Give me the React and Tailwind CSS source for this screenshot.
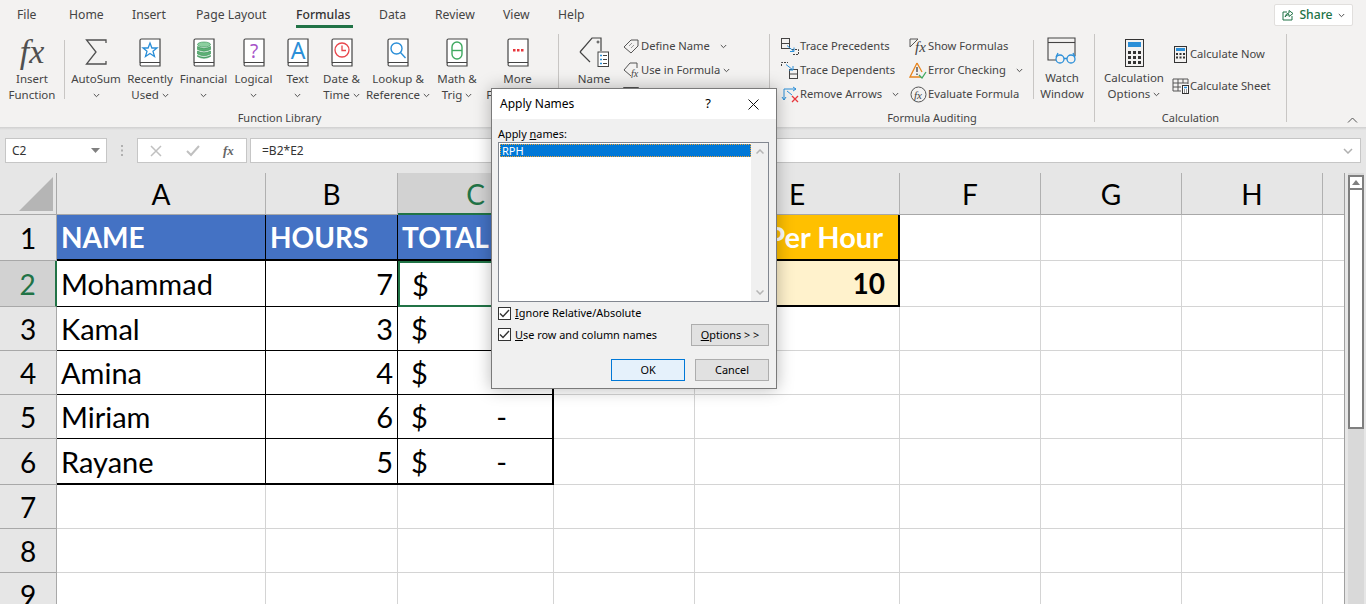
import React from 'react';

const ui = { fontFamily: '"Noto Sans", sans-serif' };

const Chevron = ({ className = '' }) => (
  <svg width="7" height="5" viewBox="0 0 7 5" className={`inline-block ${className}`}>
    <path d="M0.8 1 L3.5 3.7 L6.2 1" fill="none" stroke="#505050" strokeWidth="1" />
  </svg>
);

const Book = ({ children }) => (
  <svg width="22" height="29" viewBox="0 0 22 29">
    <path d="M1 25V2.5Q1 1 2.5 1H21V28H2.5Q1 28 1 26Q1 24.5 2.5 24.5H21" fill="#fff" stroke="#444" strokeWidth="1.2" />
    {children}
  </svg>
);

const icons = {
  star: <path d="M11 5l1.9 5h5.100l-4 3.300 1.500 5.200-4.500-3-4.500 3 1.500-5.200-4-3.300h5.100z" fill="none" stroke="#2b8fd8" strokeWidth="1.3" />,
  coins: (
    <g fill="#5db075" stroke="#2f8f4f" strokeWidth="0.6">
      <ellipse cx="11" cy="6.5" rx="6.5" ry="2.5" fill="#8ccf9f" />
      <path d="M4.5 8.5q6.5 3.500 13 0v3q-6.500 3.500-13 0z" />
      <path d="M4.5 13q6.5 3.500 13 0v3q-6.500 3.500-13 0z" />
      <path d="M4.5 17.5q6.5 3.500 13 0v1q-6.500 3.500-13 0z" />
    </g>
  ),
  question: <text x="11" y="20" textAnchor="middle" fontSize="19" fill="#a654c8" fontFamily="Noto Sans, sans-serif">?</text>,
  letter: <text x="11" y="21" textAnchor="middle" fontSize="23" fill="#2b8fd8" fontFamily="Noto Sans, sans-serif">A</text>,
  clock: (
    <g fill="none" stroke="#e8474c" strokeWidth="1.3">
      <circle cx="11" cy="12" r="7" />
      <path d="M11 7.5V12.5H15" />
    </g>
  ),
  lens: (
    <g fill="none" stroke="#2b8fd8" strokeWidth="1.4">
      <circle cx="9.5" cy="10.5" r="5.5" />
      <path d="M13.5 14.5L18.5 20" />
    </g>
  ),
  theta: (
    <g fill="none" stroke="#3fa960" strokeWidth="1.4">
      <rect x="6" y="4" width="10" height="17" rx="5" />
      <path d="M6 12.5H16" />
    </g>
  ),
  dots: (
    <g fill="#e8363c">
      <rect x="6" y="11" width="2.5" height="2.5" />
      <rect x="10" y="11" width="2.5" height="2.5" />
      <rect x="14" y="11" width="2.5" height="2.5" />
    </g>
  ),
};

const BookButton = ({ width, icon, line1, line2, caret }) => (
  <div className="flex flex-col items-center shrink-0" style={{ width }}>
    <div className="h-[30px] flex items-center justify-center">
      <Book>{icons[icon]}</Book>
    </div>
    <div className="mt-[4px] text-center leading-[16px] whitespace-nowrap">
      <div>{line1}</div>
      <div>
        {line2} {caret && <Chevron className="align-middle" />}
      </div>
    </div>
  </div>
);

const SmallRow = ({ icon, label, caret, caretGap = 'ml-[10px]' }) => (
  <div className="h-6 flex items-center whitespace-nowrap text-[11.2px]">
    <span className="w-[18px] h-[18px] mr-[1px] flex items-center justify-center shrink-0">{icon}</span>
    <span>{label}</span>
    {caret && <Chevron className={caretGap} />}
  </div>
);

const Sep = ({ className = '' }) => <div className={`w-px bg-[#c8c6c4] shrink-0 ${className}`} />;

const TracePrecedents = () => (
  <svg width="18" height="17" viewBox="0 0 18 17" fill="none">
    <rect x="0.5" y="0.5" width="8" height="10" stroke="#444" />
    <path d="M0.5 5.5H8.5" stroke="#444" />
    <path d="M11 11.5H17.5V16.5H11" stroke="#444" strokeDasharray="2 1" />
    <path d="M6 7.5L13 13.500M13 9.500V13.500H9" stroke="#2b8fd8" />
  </svg>
);

const TraceDependents = () => (
  <svg width="18" height="17" viewBox="0 0 18 17" fill="none">
    <path d="M0.5 4V0.5H7" stroke="#444" strokeDasharray="2 1" />
    <rect x="8.5" y="7.5" width="8" height="9" stroke="#444" />
    <path d="M8.500 12H16.500" stroke="#444" />
    <path d="M5 2.500L12 8M12 4V8H8" stroke="#2b8fd8" />
  </svg>
);

const Ribbon = () => (
  <div className="h-[96px] flex text-[11.5px] text-[#444] relative">
    <div className="w-[64px] shrink-0 flex flex-col items-center">
      <div className="h-[36px] mt-[4px] flex items-center justify-center" style={{ fontFamily: '"Liberation Serif", serif' }}>
        <span className="italic text-[34px] leading-none text-[#505050]">fx</span>
      </div>
      <div className="mt-[1px] text-center leading-[16px]">
        <div>Insert</div>
        <div>Function</div>
      </div>
    </div>
    <Sep className="h-[59px] mt-[10px]" />
    <div className="w-[493px] shrink-0 flex flex-col">
      <div className="flex pt-[7px] h-[79px] pl-[4px]">
        <div className="flex flex-col items-center w-[54px] shrink-0">
          <div className="h-[30px] flex items-center justify-center">
            <svg width="22" height="26" viewBox="0 0 22 26" fill="none">
              <path d="M21 4V1H1.5L11 13L1.5 25H21V22" stroke="#505050" strokeWidth="1.3" />
            </svg>
          </div>
          <div className="mt-[4px] text-center leading-[16px]">
            <div>AutoSum</div>
            <div><Chevron /></div>
          </div>
        </div>
        <BookButton width={54} icon="star" line1="Recently" line2="Used" caret />
        <BookButton width={53} icon="coins" line1="Financial" line2={<Chevron />} />
        <BookButton width={47} icon="question" line1="Logical" line2={<Chevron />} />
        <BookButton width={41} icon="letter" line1="Text" line2={<Chevron />} />
        <BookButton width={47} icon="clock" line1="Date &" line2="Time" caret />
        <BookButton width={66} icon="lens" line1="Lookup &" line2="Reference" caret />
        <BookButton width={52} icon="theta" line1="Math &" line2="Trig" caret />
        <BookButton width={69} icon="dots" line1="More" line2="Functions" caret />
      </div>
      <div className="text-center text-[11px] leading-[16px] mt-[1px] pr-[64px]">Function Library</div>
    </div>
    <Sep className="h-[88px] mt-[4px]" />
    <div className="w-[210px] shrink-0 flex pt-[7px]">
      <div className="w-[56px] flex flex-col items-center shrink-0 ml-[7px]">
        <div className="h-[30px] flex items-center justify-center">
          <svg width="30" height="30" viewBox="0 0 30 30" fill="none">
            <path d="M1 15L13 1H22V14M11 25L1 15" stroke="#444" strokeWidth="1.2" />
            <circle cx="19" cy="5" r="1" stroke="#444" />
            <rect x="19" y="15" width="10.5" height="14.5" fill="#fff" stroke="#444" />
            <path d="M21 18.5h2M21 22.5h2M21 26.5h2" stroke="#2b8fd8" strokeWidth="1.5" />
            <path d="M24 18.5h4M24 22.5h4M24 26.5h4" stroke="#444" />
          </svg>
        </div>
        <div className="mt-[4px] leading-[16px]">Name</div>
      </div>
      <div className="flex flex-col -mt-[3px]">
        <SmallRow
          label="Define Name"
          caret
          caretGap="ml-[10px]"
          icon={
            <svg width="16" height="15" viewBox="0 0 16 15" fill="none">
              <path d="M1 8L8 1H15V7L8 14z" stroke="#555" />
              <path d="M6 7l3-3M8 9l3-3" stroke="#999" />
            </svg>
          }
        />
        <SmallRow
          label="Use in Formula"
          caret
          caretGap="ml-[3px]"
          icon={
            <svg width="16" height="16" viewBox="0 0 16 16" fill="none">
              <path d="M8 14L1 8L7 1H14V6" stroke="#555" />
              <text x="8" y="15" fontSize="10" fontStyle="italic" fill="#444" fontFamily="Liberation Serif, serif">fx</text>
            </svg>
          }
        />
        <SmallRow
          label="Create from Selection"
          icon={
            <svg width="16" height="14" viewBox="0 0 16 14" fill="none">
              <path d="M0.5 0.5H15.5V13.5H0.5zM0.5 5H15.500M5.5 0.5V13.500M10.5 0.5V13.500" stroke="#555" />
            </svg>
          }
        />
      </div>
    </div>
    <Sep className="h-[88px] mt-[4px]" />
    <div className="w-[324px] shrink-0 flex flex-col">
      <div className="flex h-[72px] pt-[4px] pl-[11px]">
        <div className="w-[128px] shrink-0">
          <SmallRow label="Trace Precedents" icon={<TracePrecedents />} />
          <SmallRow label="Trace Dependents" icon={<TraceDependents />} />
          <SmallRow
            label="Remove Arrows"
            caret
            icon={
              <svg width="18" height="17" viewBox="0 0 18 17" fill="none">
                <path d="M3 14V3H15M1 11L3 14L5 11M12 1L15 3L12 5M6 5L11 9" stroke="#2b8fd8" />
                <path d="M11 10L17 16M17 10L11 16" stroke="#e8363c" strokeWidth="1.3" />
              </svg>
            }
          />
        </div>
        <div className="w-[124px] shrink-0">
          <SmallRow
            label="Show Formulas"
            icon={
              <svg width="18" height="17" viewBox="0 0 18 17" fill="none">
                <path d="M1 1H9L1 9z" stroke="#555" />
                <text x="6" y="14" fontSize="15" fontStyle="italic" fill="#444" fontFamily="Liberation Serif, serif">fx</text>
              </svg>
            }
          />
          <SmallRow
            label="Error Checking"
            caret
            icon={
              <svg width="18" height="17" viewBox="0 0 18 17" fill="none">
                <path d="M8 1L1 15H12" stroke="#e8851d" strokeWidth="1.3" />
                <path d="M8 1L13 10" stroke="#e8851d" strokeWidth="1.3" />
                <path d="M8 5V10M8 11.5V13" stroke="#333" strokeWidth="1.2" />
                <path d="M10 13L13 16L17 10" stroke="#3fa960" strokeWidth="1.3" />
              </svg>
            }
          />
          <SmallRow
            label="Evaluate Formula"
            icon={
              <svg width="17" height="17" viewBox="0 0 17 17" fill="none">
                <circle cx="8.5" cy="8.5" r="7.5" stroke="#555" />
                <text x="4" y="13" fontSize="11" fontStyle="italic" fill="#444" fontFamily="Liberation Serif, serif">fx</text>
              </svg>
            }
          />
        </div>
        <Sep className="h-[59px] mt-[6px]" />
        <div className="w-[56px] shrink-0 flex flex-col items-center pt-[3px]">
          <div className="h-[30px] flex items-center justify-center">
            <svg width="30" height="28" viewBox="0 0 30 28" fill="none">
              <path d="M9 23H1V1H28V19" stroke="#444" strokeWidth="1.1" />
              <path d="M1 5.5H28" stroke="#444" strokeWidth="1.1" />
              <circle cx="13" cy="22" r="4" stroke="#2b8fd8" strokeWidth="1.3" />
              <circle cx="24" cy="22" r="4" stroke="#2b8fd8" strokeWidth="1.3" />
              <path d="M17 21.5h3M9 20l2-4M28 20l-2-4" stroke="#2b8fd8" strokeWidth="1.3" />
            </svg>
          </div>
          <div className="mt-[5px] text-center leading-[16px]">
            <div>Watch</div>
            <div>Window</div>
          </div>
        </div>
      </div>
      <div className="text-center text-[11px] leading-[16px] mt-[8px]">Formula Auditing</div>
    </div>
    <Sep className="h-[88px] mt-[4px]" />
    <div className="w-[191px] shrink-0 flex flex-col">
      <div className="flex h-[72px] pt-[8px]">
        <div className="w-[78px] shrink-0 flex flex-col items-center">
          <div className="h-[30px] flex items-center justify-center">
            <svg width="19" height="28" viewBox="0 0 19 28" fill="none">
              <rect x="0.5" y="0.5" width="18" height="27" stroke="#333" />
              <rect x="3" y="3" width="13" height="5" fill="#2b8fd8" />
              <path d="M3 12h3v3H3zM8 12h3v3H8zM13 12h3v3h-3zM3 17h3v3H3zM8 17h3v3H8zM13 17h3v3h-3zM3 22h3v3H3zM8 22h3v3H8zM13 22h3v3h-3z" fill="#333" />
            </svg>
          </div>
          <div className="mt-[3px] text-center leading-[16px] whitespace-nowrap">
            <div>Calculation</div>
            <div>Options <Chevron className="align-middle" /></div>
          </div>
        </div>
        <div className="flex flex-col gap-[8px] pt-[4px] -ml-[2px]">
          <SmallRow
            label="Calculate Now"
            icon={
              <svg width="13" height="17" viewBox="0 0 13 17" fill="none">
                <rect x="0.5" y="0.5" width="12" height="16" stroke="#333" />
                <rect x="2" y="2" width="9" height="3" fill="#2b8fd8" />
                <path d="M2 7h2v2H2zM5.5 7h2v2h-2zM9 7h2v2H9zM2 10.5h2v2H2zM5.5 10.5h2v2h-2zM9 10.5h2v2H9z" fill="#333" />
              </svg>
            }
          />
          <SmallRow
            label="Calculate Sheet"
            icon={
              <svg width="17" height="16" viewBox="0 0 17 16" fill="none">
                <path d="M9 13H1V1H16V6M1 5H16M1 9H9M6 1V13M11 1V5" stroke="#555" />
                <rect x="10.5" y="7.5" width="6" height="8" fill="#fff" stroke="#333" />
                <path d="M12 9.5h3" stroke="#2b8fd8" strokeWidth="1.5" />
                <path d="M12 12h1M14 12h1M12 14h1M14 14h1" stroke="#333" />
              </svg>
            }
          />
        </div>
      </div>
      <div className="text-center text-[11px] leading-[16px] mt-[8px]">Calculation</div>
    </div>
    <Sep className="h-[88px] mt-[4px]" />
    <svg width="11" height="6" viewBox="0 0 11 6" className="absolute left-[1347px] top-[87px]">
      <path d="M1 5.5L5.5 1L10 5.5" fill="none" stroke="#555" />
    </svg>
  </div>
);

const tabs = [
  ['File', 'w-[52px] pl-[17px]'],
  ['Home', 'w-[64px] pl-[17px]'],
  ['Insert', 'w-[80px] pl-[16px]'],
  ['Page Layout', 'w-[100px]'],
  ['Formulas', 'w-[83px]'],
  ['Data', 'w-[56px]'],
  ['Review', 'w-[68px]'],
  ['View', 'w-[55px]'],
  ['Help', 'w-[50px]'],
];

const TopTabs = () => (
  <div className="h-[30px] flex items-center text-[12.2px] text-[#444] relative">
    {tabs.map(([name, cls]) => (
      <div key={name} className={`${cls} shrink-0 h-full flex items-center relative`}>
        <span className={name === 'Formulas' ? 'font-medium text-[#333]' : ''}>{name}</span>
        {name === 'Formulas' && <div className="absolute left-0 bottom-[2px] w-[57px] h-[3px] bg-[#217346]" />}
      </div>
    ))}
    <div className="ml-auto mr-[13px] w-[79px] h-[22px] bg-white border border-[#e1dfdd] rounded-[2px] flex items-center justify-center gap-[5px] text-[#217346] font-medium">
      <svg width="12" height="12" viewBox="0 0 12 12" fill="none">
        <path d="M5 3H1V11H10V7" stroke="#217346" />
        <path d="M3 8Q4 4 7 4V1.5L11 4.5L7 7.5V5.5Q5 5.5 3 8z" stroke="#217346" />
      </svg>
      <span>Share</span>
      <Chevron />
    </div>
  </div>
);

const FormulaBar = () => (
  <div className="h-[43px] pt-[8px] bg-[#e6e6e6] flex items-start text-[12px] text-[#333]">
    <div className="ml-[5px] w-[102px] h-[25px] bg-white border border-[#c6c6c6] flex items-center justify-between pl-[6px] pr-[6px] shrink-0">
      <span>C2</span>
      <svg width="9" height="5" viewBox="0 0 9 5"><path d="M0 0H9L4.5 5z" fill="#808080" /></svg>
    </div>
    <div className="w-[30px] h-[25px] flex items-center justify-center shrink-0">
      <svg width="3" height="11" viewBox="0 0 3 11"><path d="M0 0h2v2H0zM0 4.5h2v2H0zM0 9h2v2H0z" fill="#b0b0b0" /></svg>
    </div>
    <div className="w-[110px] h-[25px] bg-white border border-[#c6c6c6] flex items-center shrink-0">
      <svg width="12" height="12" viewBox="0 0 12 12" className="ml-[12px]"><path d="M1 1L11 11M11 1L1 11" stroke="#c0c0c0" strokeWidth="1.5" /></svg>
      <svg width="14" height="12" viewBox="0 0 14 12" className="ml-[24px]"><path d="M1 6L5 10L13 1" fill="none" stroke="#c0c0c0" strokeWidth="2" /></svg>
      <span className="ml-[23px] italic font-bold text-[#666] text-[13px]" style={{ fontFamily: '"Liberation Serif", serif' }}>fx</span>
    </div>
    <div className="ml-[3px] w-[1111px] h-[25px] bg-white border border-[#c6c6c6] flex items-center justify-between pl-[11px] pr-[7px] shrink-0">
      <span>=B2*E2</span>
      <svg width="10" height="6" viewBox="0 0 10 6"><path d="M1 1L5 5L9 1" fill="none" stroke="#b0b0b0" strokeWidth="1.5" /></svg>
    </div>
  </div>
);

// column widths of the visible sheet, row-header first
const gridCols = 'grid grid-cols-[57px_209px_132px_156px_141px_205px_141px_141px_141px_21px]';
const rowHeights = ['h-[46px]', 'h-[46px]', 'h-[44px]', 'h-[44px]', 'h-[44px]', 'h-[46px]', 'h-[44px]', 'h-[44px]', 'h-[44px]'];
const colLetters = ['A', 'B', 'C', 'D', 'E', 'F', 'G', 'H', ''];

const rows = [
  ['Mohammad', '7'],
  ['Kamal', '3'],
  ['Amina', '4'],
  ['Miriam', '6'],
  ['Rayane', '5'],
];

const blank = 'border-r border-b border-[#d4d4d4]';
const txt = 'text-[29px] leading-none text-black';
const head = 'text-white font-bold text-[28px]';

const Sheet = () => (
  <div className="flex" style={{ fontFamily: 'Lato, sans-serif' }}>
    <div className="w-[1345px] shrink-0 border-r border-[#a0a0a0]">
      <div className={gridCols}>
        <div className="h-[42px] bg-[#e6e6e6] border-r border-b border-[#a8a8a8] relative overflow-hidden">
          <div className="absolute right-[3px] bottom-[3px] w-0 h-0 border-l-[34px] border-l-transparent border-b-[34px] border-b-[#b5b5b5]" />
        </div>
        {colLetters.map((c) => (
          <div
            key={c || 'next'}
            className={`h-[42px] border-b flex items-center justify-center text-[28px] pt-[1px] ${
              c === 'C' ? 'bg-[#d2d2d2] text-[#217346] border-[#217346] border-b-2' : 'bg-[#e6e6e6] text-black border-[#a8a8a8]'
            } ${c ? 'border-r border-r-[#b0b0b0]' : ''}`}
          >
            {c}
          </div>
        ))}

        {rowHeights.map((h, i) => {
          const r = i + 1;
          const data = rows[i - 1];
          const activeRow = r === 2;
          return (
            <React.Fragment key={r}>
              <div
                className={`${h} border-b flex items-center justify-center text-[28px] border-r ${
                  activeRow ? 'bg-[#d2d2d2] text-[#217346] border-r-2 border-r-[#217346] border-b-[#a8a8a8]' : 'bg-[#e6e6e6] text-black border-[#a8a8a8]'
                }`}
              >
                {r}
              </div>

              {r === 1 && (
                <>
                  <div className={`${h} bg-[#4472c4] border-r border-b-2 border-black flex items-center pl-[4px] ${head}`}>NAME</div>
                  <div className={`${h} bg-[#4472c4] border-r border-b-2 border-black flex items-center pl-[4px] ${head}`}>HOURS</div>
                  <div className={`${h} bg-[#4472c4] border-r-2 border-b-2 border-black flex items-center pl-[4px] ${head}`}>TOTAL</div>
                  <div className={`${h} ${blank}`} />
                  <div className={`${h} bg-[#ffc000] border-r-2 border-b-2 border-black flex items-center justify-end pr-[15px] text-white font-bold text-[29px]`}>Per Hour</div>
                </>
              )}

              {data && (
                <>
                  <div className={`${h} ${i === 5 ? 'border-b-2' : 'border-b'} border-r border-black flex items-center pl-[4px] ${txt}`}>{data[0]}</div>
                  <div className={`${h} ${i === 5 ? 'border-b-2' : 'border-b'} border-r border-black flex items-center justify-end pr-[4px] ${txt}`}>{data[1]}</div>
                  <div
                    className={`${h} flex items-center justify-between pr-[45px] ${txt} ${
                      r === 2 ? 'pl-[12px] border-2 border-[#217346]' : `pl-[13px] border-r-2 ${i === 5 ? 'border-b-2' : 'border-b'} border-black`
                    }`}
                  >
                    <span>$</span>
                    <span>-</span>
                  </div>
                  <div className={`${h} ${blank}`} />
                  {r === 2 ? (
                    <div className={`${h} bg-[#fff2cc] border-r-2 border-b-2 border-black flex items-center justify-end pr-[13px] font-bold text-[28px] text-black`}>10</div>
                  ) : (
                    <div className={`${h} ${blank}`} />
                  )}
                </>
              )}

              {!data && r !== 1 && (
                <>
                  <div className={`${h} ${blank}`} />
                  <div className={`${h} ${blank}`} />
                  <div className={`${h} ${blank}`} />
                  <div className={`${h} ${blank}`} />
                  <div className={`${h} ${blank}`} />
                </>
              )}

              <div className={`${h} ${blank}`} />
              <div className={`${h} ${blank}`} />
              <div className={`${h} ${blank}`} />
              <div className={`${h} border-b border-[#d4d4d4]`} />
            </React.Fragment>
          );
        })}
      </div>
    </div>
    <div className="w-[21px] shrink-0 bg-[#e6e6e6] pl-[3px]">
      <div className="w-[16px] h-full bg-[#d9d9d9] pt-[2px] flex flex-col">
        <div className="h-[15px] bg-white border-2 border-[#7f7f7f] flex items-center justify-center">
          <svg width="8" height="5" viewBox="0 0 8 5"><path d="M4 0L8 5H0z" fill="#7f7f7f" /></svg>
        </div>
        <div className="h-[239px] bg-white border-2 border-t-0 border-[#7f7f7f]" />
      </div>
    </div>
  </div>
);

const CheckRow = ({ hot, rest }) => (
  <div className="flex items-center">
    <span className="w-[13px] h-[13px] border border-[#333] bg-white flex items-center justify-center shrink-0">
      <svg width="11" height="9" viewBox="0 0 11 9"><path d="M1 4.5L4 7.5L10 1" fill="none" stroke="#333" strokeWidth="1.4" /></svg>
    </span>
    <span className="ml-[4px]"><u>{hot}</u>{rest}</span>
  </div>
);

const ApplyNames = () => (
  <div
    className="absolute left-[491px] top-[88px] w-[286px] h-[301px] bg-[#f0f0f0] border border-[#7a7a7a] shadow-[0_0_16px_rgba(0,0,0,0.28)] flex flex-col text-[10.9px] text-black"
    style={ui}
  >
    <div className="h-[30px] bg-white flex items-center pl-[8px] text-[12px] shrink-0">
      <span>Apply Names</span>
      <span className="ml-auto text-[13px] mr-[37px]">?</span>
      <svg width="11" height="11" viewBox="0 0 11 11" className="mr-[17px]"><path d="M0.5 0.5L10.5 10.5M10.5 0.5L0.5 10.5" stroke="#111" /></svg>
    </div>
    <div className="flex-1 pl-[6px] pr-[7px] flex flex-col">
      <div className="h-[23px] pt-[7px] leading-[16px]">Apply <u>n</u>ames:</div>
      <div className="h-[160px] border border-[#828790] bg-white flex shrink-0">
        <div className="flex-1 pt-[1px] pl-[1px]">
          <div className="h-[13px] bg-[#0078d7] outline-1 outline-dotted outline-[#f0a030] -outline-offset-1 text-white leading-[13px] pl-[2px] text-[11px]">RPH</div>
        </div>
        <div className="w-[17px] bg-[#f0f0f0] flex flex-col items-center justify-between py-[6px]">
          <svg width="8" height="5" viewBox="0 0 8 5"><path d="M0.5 4.5L4 1L7.5 4.5" fill="none" stroke="#b5b5b5" strokeWidth="1.5" /></svg>
          <svg width="8" height="5" viewBox="0 0 8 5"><path d="M0.5 0.5L4 4L7.5 0.5" fill="none" stroke="#b5b5b5" strokeWidth="1.5" /></svg>
        </div>
      </div>
      <div className="mt-[4px] h-[14px] flex items-center">
        <CheckRow hot="I" rest="gnore Relative/Absolute" />
      </div>
      <div className="mt-[4px] h-[22px] flex items-center justify-between">
        <CheckRow hot="U" rest="se row and column names" />
        <div className="w-[78px] h-[22px] bg-[#e1e1e1] border border-[#adadad] flex items-center justify-center">
          <span><u>O</u>ptions &gt; &gt;</span>
        </div>
      </div>
      <div className="mt-[13px] flex justify-end gap-[10px]">
        <div className="w-[74px] h-[22px] bg-[#e5f1fb] border border-[#0078d7] flex items-center justify-center">OK</div>
        <div className="w-[74px] h-[22px] bg-[#e1e1e1] border border-[#adadad] flex items-center justify-center">Cancel</div>
      </div>
    </div>
  </div>
);

const App = () => {
  return (
    <div className="w-[1366px] h-[604px] overflow-hidden relative bg-white" style={ui}>
      <div className="bg-[#f3f2f1]">
        <TopTabs />
        <Ribbon />
        <div className="h-[1px]" />
      </div>
      <div className="h-[3px] bg-gradient-to-b from-[#cfcfcf] to-[#e6e6e6]" />
      <FormulaBar />
      <Sheet />
      <ApplyNames />
    </div>
  );
};

export default App;
